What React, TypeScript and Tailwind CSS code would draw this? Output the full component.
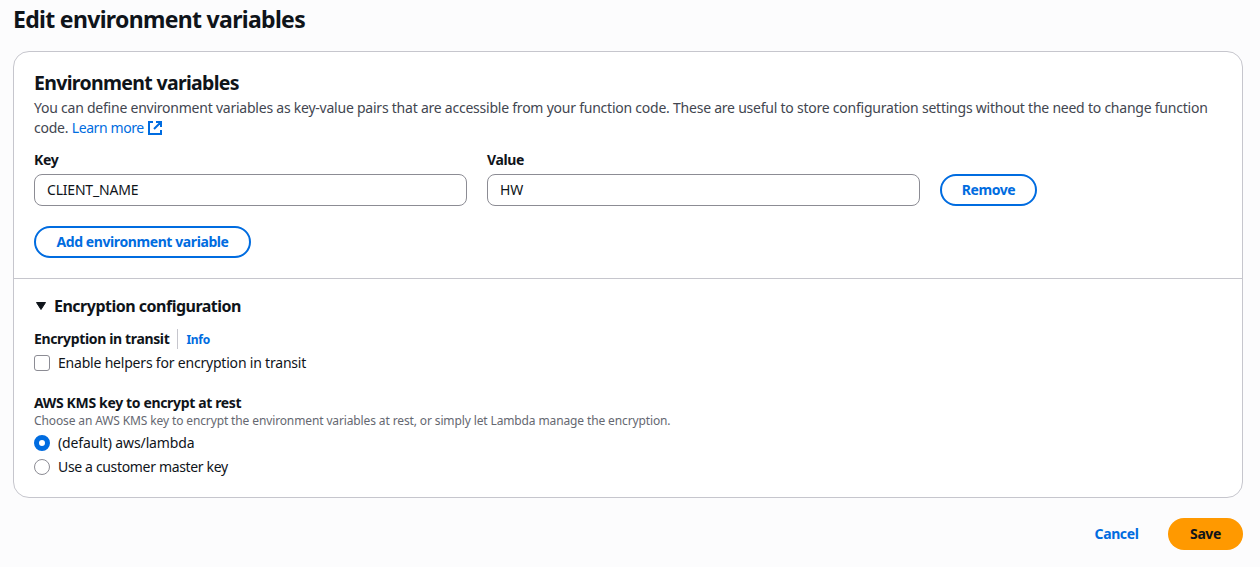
import React from "react";

const label = "text-[14px] leading-5 font-bold tracking-[-0.35px]";
const input =
  "h-8 w-[433px] rounded-lg border border-[#8c8c94] bg-white px-3 pb-0.5 text-[14px] leading-5 text-[#0f141a]";
const outlineButton =
  "h-8 rounded-full border-2 border-[#006ce0] bg-white text-[14px] leading-5 font-bold text-[#006ce0] whitespace-nowrap tracking-[-0.41px]";

function ExternalIcon() {
  return (
    <svg className="ml-[3px] inline-block h-4 w-4 align-[-3px]" viewBox="0 0 16 16" fill="none" stroke="currentColor" strokeWidth="2">
      <path d="M9 2h5v5M7 9l7-7M14 10v4H2V2h4" />
    </svg>
  );
}

export default function App() {
  return (
    <main className="h-[567px] w-[1260px] overflow-hidden bg-[#fcfcfd] pl-[13px] pr-[17px] pt-[5px] font-['Noto_Sans',sans-serif] text-[14px] leading-5 text-[#0f141a]">
      <h1 className="h-[30px] text-[23px] leading-[28px] font-bold tracking-[-0.68px]">Edit environment variables</h1>
      <section className="mt-4 h-[447px] rounded-2xl border border-[#c6c6cd] bg-white">
        <div className="h-[226px] px-5 pt-[19px]">
          <h2 className="text-[19.5px] leading-6 font-bold tracking-[-0.68px]">Environment variables</h2>
          <p className="mt-[3px] whitespace-nowrap text-[14px] leading-5 tracking-[-0.232px] text-[#424650]">
            You can define environment variables as key-value pairs that are accessible from your function code. These are useful to store configuration settings without the need to change function
            <br />
            code. <a className="tracking-[-0.4px] text-[#006ce0]">Learn more<ExternalIcon /></a>
          </p>
          <div className="mt-3 flex items-end gap-5">
            <label className="flex flex-col gap-1">
              <span className={label}>Key</span>
              <input className={input + " tracking-[-0.2px]"} defaultValue="CLIENT_NAME" />
            </label>
            <label className="flex flex-col gap-1">
              <span className={label}>Value</span>
              <input className={input} defaultValue="HW" />
            </label>
            <button className={outlineButton + " w-[97px]"}>Remove</button>
          </div>
          <button className={outlineButton + " mt-5 w-[217px]"}>Add environment variable</button>
        </div>
        <div className="border-t border-[#c6c6cd] px-5 pt-[17px]">
          <h3 className="flex items-center text-[16px] leading-5 font-bold tracking-[-0.5px]">
            <svg className="mr-1 h-4 w-4" viewBox="0 0 16 16" fill="currentColor" stroke="currentColor" strokeLinejoin="round">
              <path d="M2.5 4.5h9L7 11.5z" />
            </svg>
            Encryption configuration
          </h3>
          <div className="mt-[13px] flex h-5 items-center">
            <span className={label}>Encryption in transit</span>
            <a className="ml-2 border-l border-[#c6c6cd] pl-2 text-[12px] leading-5 font-bold tracking-[-0.3px] text-[#006ce0]"><span className="relative top-px">Info</span></a>
          </div>
          <label className="mt-1 flex items-center gap-2 tracking-[-0.2px]">
            <span className="h-4 w-4 rounded-[3px] border border-[#8c8c94] bg-white" />
            Enable helpers for encryption in transit
          </label>
          <div className={label + " mt-5"}>AWS KMS key to encrypt at rest</div>
          <p className="text-[12px] leading-4 tracking-[-0.125px] text-[#656871]">Choose an AWS KMS key to encrypt the environment variables at rest, or simply let Lambda manage the encryption.</p>
          <label className="mt-1 flex items-center gap-2 tracking-[-0.12px]">
            <span className="h-4 w-4 rounded-full border-5 border-[#006ce0] bg-white" />
            (default) aws/lambda
          </label>
          <label className="mt-1 flex items-center gap-2 tracking-[-0.34px]">
            <span className="h-4 w-4 rounded-full border border-[#8c8c94] bg-white" />
            Use a customer master key
          </label>
        </div>
      </section>
      <footer className="mt-5 flex justify-end gap-2">
        <button className="h-8 w-[87px] font-bold tracking-[-0.4px] text-[#006ce0]">Cancel</button>
        <button className="h-8 w-[75px] rounded-full bg-[#ff9900] font-bold tracking-[-0.4px]">Save</button>
      </footer>
    </main>
  );
}
